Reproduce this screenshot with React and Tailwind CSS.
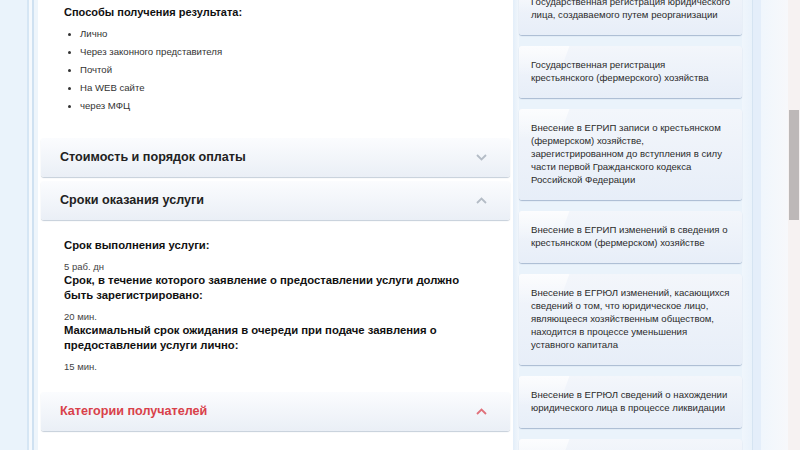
import React from "react";

const Chevron = ({ up, color }) => (
  <svg width="11" height="7" viewBox="0 0 11 7" className="shrink-0">
    <path
      d={up ? "M1 6 L5.5 1.5 L10 6" : "M1 1 L5.5 5.5 L10 1"}
      fill="none"
      stroke={color}
      strokeWidth="1.8"
    />
  </svg>
);

const Header = ({ title, up, red }) => (
  <div className="h-[39px] shrink-0 mx-[3px] flex items-center justify-between pl-[19px] pr-[23px] rounded-[3px] bg-[linear-gradient(#fbfcfe,#eaeff6)] shadow-[0_1px_1px_rgba(150,165,185,0.55)]">
    <span className={`text-[12.6px] font-bold ${red ? "text-[#d9414a]" : "text-[#222]"}`}>{title}</span>
    <Chevron up={up} color={red ? "#e0707a" : "#b4bcc6"} />
  </div>
);

const Card = ({ lines }) => (
  <div className="relative shrink-0 overflow-hidden rounded-[3px] pt-[12px] pb-[14px] pl-[12px] pr-[4px] min-h-[52px] bg-[linear-gradient(#f3f6fb,#e7eef8)] shadow-[0_1px_1px_rgba(140,160,190,0.7)]">
    <div className="absolute left-[-10px] top-0 w-[55px] h-[30px] skew-x-[-20deg] bg-[linear-gradient(rgba(255,255,255,0.75),rgba(255,255,255,0))]" />
    <div className="relative text-[9.6px] leading-[13px] text-[#2b2b2b] whitespace-nowrap">
      {lines.map((l, i) => (
        <div key={i}>{l}</div>
      ))}
    </div>
  </div>
);

export default function App() {
  const bullets = ["Лично", "Через законного представителя", "Почтой", "На WEB сайте", "через МФЦ"];
  const cards = [
    ["Государственная регистрация юридического", "лица, создаваемого путем реорганизации"],
    ["Государственная регистрация", "крестьянского (фермерского) хозяйства"],
    [
      "Внесение в ЕГРИП записи о крестьянском",
      "(фермерском) хозяйстве,",
      "зарегистрированном до вступления в силу",
      "части первой Гражданского кодекса",
      "Российской Федерации",
    ],
    ["Внесение в ЕГРИП изменений в сведения о", "крестьянском (фермерском) хозяйстве"],
    [
      "Внесение в ЕГРЮЛ изменений, касающихся",
      "сведений о том, что юридическое лицо,",
      "являющееся хозяйственным обществом,",
      "находится в процессе уменьшения",
      "уставного капитала",
    ],
    ["Внесение в ЕГРЮЛ сведений о нахождении", "юридического лица в процессе ликвидации"],
    [],
  ];

  return (
    <div className="w-[800px] h-[450px] overflow-hidden flex bg-[#eaf3fb] font-['Liberation_Sans',Arial,sans-serif]">
      {/* left margin with stripes */}
      <div className="w-[27px] shrink-0 bg-[#eaf3fb]" />
      <div className="w-[2px] shrink-0 bg-[#d6e6f4]" />
      <div className="w-[3px] shrink-0 bg-[#f5f9fd]" />
      <div className="w-[2px] shrink-0 bg-[#cfe1f1]" />
      <div className="w-[4px] shrink-0 bg-[#eef5fb]" />

      {/* main panel */}
      <div className="w-[475px] shrink-0 bg-white flex flex-col">
        <div className="pl-[26px] pt-[4px]">
          <div className="text-[11px] leading-[16px] font-bold text-[#111]">Способы получения результата:</div>
          <ul className="mt-[5px]">
            {bullets.map((b) => (
              <li key={b} className="flex items-center h-[18px] text-[9.6px] text-[#333]">
                <span className="w-[3px] h-[3px] rounded-full bg-[#333] ml-[4px] mr-[9px]" />
                {b}
              </li>
            ))}
          </ul>
        </div>
        <div className="h-[23px] shrink-0" />
        <Header title="Стоимость и порядок оплаты" />
        <div className="h-[4px] shrink-0" />
        <Header title="Сроки оказания услуги" up />
        <div className="pl-[26px] pt-[17px] pb-[19px] text-[#111]">
          <div className="text-[11.3px] leading-[16px] font-bold">Срок выполнения услуги:</div>
          <div className="mt-[8px] text-[9.5px] leading-[12px] text-[#444]">5 раб. дн</div>
          <div className="text-[11.3px] leading-[15px] font-bold pr-[20px]">
            Срок, в течение которого заявление о предоставлении услуги должно
            <br />
            быть зарегистрировано:
          </div>
          <div className="mt-[8px] text-[9.5px] leading-[12px] text-[#444]">20 мин.</div>
          <div className="text-[11.3px] leading-[15px] font-bold pr-[20px]">
            Максимальный срок ожидания в очереди при подаче заявления о
            <br />
            предоставлении услуги лично:
          </div>
          <div className="mt-[8px] text-[9.5px] leading-[12px] text-[#444]">15 мин.</div>
        </div>
        <Header title="Категории получателей" up red />
      </div>

      {/* sidebar */}
      <div className="w-[6px] shrink-0 bg-[linear-gradient(90deg,#e3eef9,#f2f7fc)]" />
      <div className="w-[223px] shrink-0 flex flex-col gap-[11px] -mt-[17px]">
        {cards.map((c, i) => (
          <Card key={i} lines={c} />
        ))}
      </div>
      <div className="w-[10px] shrink-0 bg-[linear-gradient(90deg,#f0f6fc,#e9f2fb)]" />
      <div className="w-[1px] shrink-0 bg-[#d5e4f2]" />
      <div className="w-[8px] shrink-0 bg-[#e4eefa]" />
      <div className="w-[27px] shrink-0 bg-[linear-gradient(90deg,#f0f6fc,#f7f8fb)]" />
      {/* scrollbar */}
      <div className="w-[12px] shrink-0 bg-[#f6f2f2] flex flex-col pt-[110px] pl-[1px] pr-[1px]">
        <div className="h-[110px] bg-[#bdb8b8]" />
      </div>
    </div>
  );
}
